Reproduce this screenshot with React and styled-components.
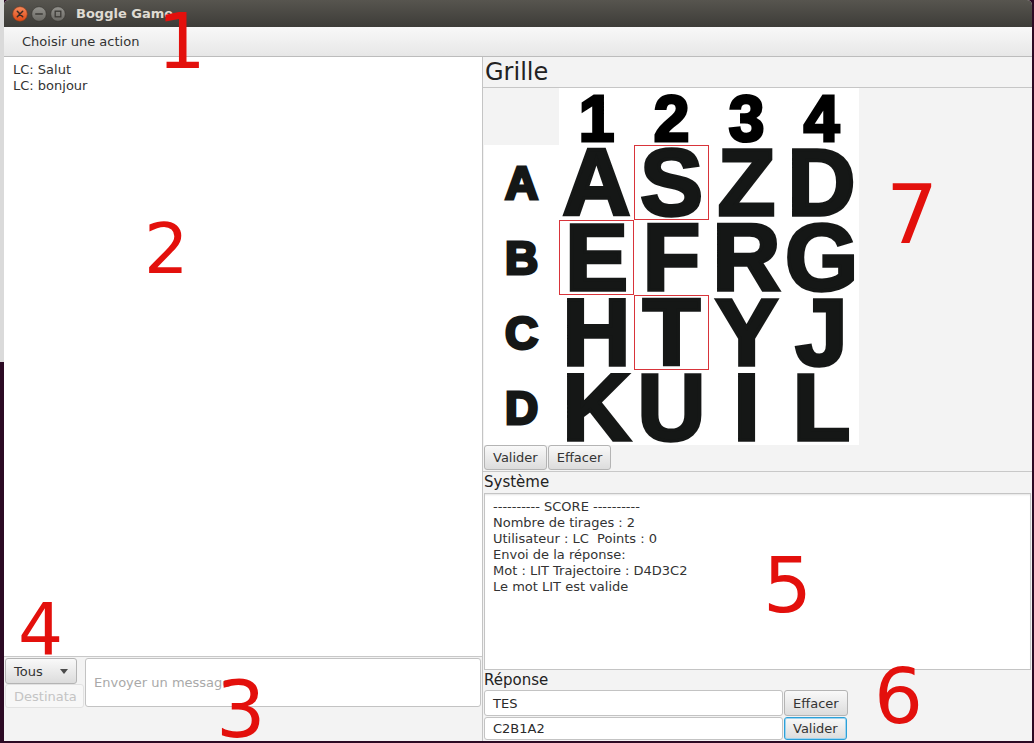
import React from 'react';
import styled, { createGlobalStyle } from 'styled-components';

const GlobalStyle = createGlobalStyle`
  html, body {
    margin: 0;
    padding: 0;
  }
  body {
    background: #2c0a24;
    font-family: "DejaVu Sans", "Liberation Sans", sans-serif;
    overflow: hidden;
  }
  * {
    box-sizing: border-box;
  }
`;

const GRID = [
  ['A', 'S', 'Z', 'D'],
  ['E', 'F', 'R', 'G'],
  ['H', 'T', 'Y', 'J'],
  ['K', 'U', 'I', 'L'],
];
const ROWS = ['A', 'B', 'C', 'D'];
const PATH = ['0-1', '1-0', '2-1'];

const SYSTEM_LINES = [
  '---------- SCORE ----------',
  'Nombre de tirages : 2',
  'Utilisateur : LC  Points : 0',
  'Envoi de la réponse:',
  'Mot : LIT Trajectoire : D4D3C2',
  'Le mot LIT est valide',
];

// annotations rouges posées sur la capture
const MARKS = [
  { n: '1', size: 77, top: 3, left: 157 },
  { n: '2', size: 70, top: 214, left: 144 },
  { n: '3', size: 78, top: 671, left: 216 },
  { n: '4', size: 71, top: 594, left: 18 },
  { n: '5', size: 77, top: 547, left: 763 },
  { n: '6', size: 77, top: 658, left: 874 },
  { n: '7', size: 82, top: 174, left: 886 },
];

const CloseIcon = () => (
  <svg width="16" height="16" viewBox="0 0 16 16">
    <defs>
      <linearGradient id="cl" x1="0" y1="0" x2="0" y2="1">
        <stop offset="0" stopColor="#f58a5c" />
        <stop offset="1" stopColor="#dd4814" />
      </linearGradient>
    </defs>
    <circle cx="8" cy="8" r="7.3" fill="url(#cl)" stroke="#8f3a1a" strokeWidth="0.6" />
    <path d="M5.3 5.3 L10.7 10.7 M10.7 5.3 L5.3 10.7" stroke="#3a2a24" strokeWidth="1.5" strokeLinecap="round" />
  </svg>
);

const MinIcon = () => (
  <svg width="16" height="16" viewBox="0 0 16 16">
    <defs>
      <linearGradient id="mn" x1="0" y1="0" x2="0" y2="1">
        <stop offset="0" stopColor="#94938e" />
        <stop offset="1" stopColor="#6a6964" />
      </linearGradient>
    </defs>
    <circle cx="8" cy="8" r="7.3" fill="url(#mn)" stroke="#35342f" strokeWidth="0.6" />
    <path d="M4.8 8 L11.2 8" stroke="#3c3b37" strokeWidth="1.6" strokeLinecap="round" />
  </svg>
);

const MaxIcon = () => (
  <svg width="16" height="16" viewBox="0 0 16 16">
    <defs>
      <linearGradient id="mx" x1="0" y1="0" x2="0" y2="1">
        <stop offset="0" stopColor="#94938e" />
        <stop offset="1" stopColor="#6a6964" />
      </linearGradient>
    </defs>
    <circle cx="8" cy="8" r="7.3" fill="url(#mx)" stroke="#35342f" strokeWidth="0.6" />
    <rect x="5.2" y="5.2" width="5.6" height="5.6" fill="none" stroke="#3c3b37" strokeWidth="1.3" />
  </svg>
);

const App = () => {
  return (
    <Desktop>
      <GlobalStyle />
      <Window>
        <TitleBar>
          <WindowButtons>
            <CloseIcon />
            <MinIcon />
            <MaxIcon />
          </WindowButtons>
          <Title>Boggle Game</Title>
        </TitleBar>

        <MenuBar>
          <MenuItem>Choisir une action</MenuItem>
        </MenuBar>

        <Body>
          <LeftPane>
            <ChatList>
              <ChatLine>LC: Salut</ChatLine>
              <ChatLine>LC: bonjour</ChatLine>
            </ChatList>
            <Compose>
              <RecipientColumn>
                <Combo>
                  <span>Tous</span>
                  <Arrow />
                </Combo>
                <DisabledField>Destinata</DisabledField>
              </RecipientColumn>
              <MessageField>Envoyer un message</MessageField>
            </Compose>
          </LeftPane>

          <RightPane>
            <GridTitle>Grille</GridTitle>
            <Board>
              <Corner />
              {[1, 2, 3, 4].map((c) => (
                <ColHead key={c}>{c}</ColHead>
              ))}
              {GRID.map((row, r) => (
                <React.Fragment key={r}>
                  <RowHead>{ROWS[r]}</RowHead>
                  {row.map((letter, c) => (
                    <Cell key={c} picked={PATH.includes(`${r}-${c}`)}>
                      {letter}
                    </Cell>
                  ))}
                </React.Fragment>
              ))}
            </Board>
            <ButtonRow>
              <Button>Valider</Button>
              <Button>Effacer</Button>
            </ButtonRow>
            <SectionLabel height={21}>Système</SectionLabel>
            <SystemArea>
              {SYSTEM_LINES.map((line, i) => (
                <SystemLine key={i}>{line}</SystemLine>
              ))}
            </SystemArea>
            <SectionLabel height={20}>Réponse</SectionLabel>
            <AnswerRow height={27}>
              <AnswerField>TES</AnswerField>
              <Button>Effacer</Button>
            </AnswerRow>
            <AnswerRow height={24}>
              <AnswerField>C2B1A2</AnswerField>
              <Button focused>Valider</Button>
            </AnswerRow>
          </RightPane>
        </Body>
      </Window>

      {MARKS.map((m) => (
        <Mark key={m.n} size={m.size} style={{ top: m.top, left: m.left }}>
          {m.n}
        </Mark>
      ))}
    </Desktop>
  );
};

export default App;

const Desktop = styled.div`
  position: relative;
  width: 1034px;
  height: 743px;
  padding: 0 2px 2px 4px;
  display: flex;
  background: linear-gradient(to right, #dadada 0, #dadada 4px, transparent 4px),
    #2c0a24;
  background-size: 100% 362px, auto;
  background-repeat: no-repeat;
`;

const Window = styled.div`
  flex: 1;
  display: flex;
  flex-direction: column;
  background: #f3f3f3;
  border-radius: 5px 5px 0 0;
  overflow: hidden;
`;

const TitleBar = styled.div`
  height: 27px;
  flex: 0 0 27px;
  display: flex;
  align-items: center;
  padding-left: 8px;
  background: linear-gradient(to bottom, #57554f, #3d3c38);
`;

const WindowButtons = styled.div`
  display: flex;
  gap: 3px;
  margin-right: 10px;
`;

const Title = styled.div`
  font-size: 13px;
  font-weight: bold;
  color: #dfdbd2;
`;

const MenuBar = styled.div`
  height: 30px;
  flex: 0 0 30px;
  display: flex;
  align-items: center;
  padding-left: 18px;
  background: linear-gradient(to bottom, #f8f8f8, #e7e7e7);
  border-bottom: 1px solid #bcbcbc;
`;

const MenuItem = styled.div`
  font-size: 13px;
  color: #333;
`;

const Body = styled.div`
  flex: 1;
  display: flex;
  min-height: 0;
`;

const LeftPane = styled.div`
  width: 479px;
  flex: 0 0 479px;
  display: flex;
  flex-direction: column;
  border-right: 1px solid #c4c4c4;
`;

const ChatList = styled.div`
  height: 600px;
  flex: 0 0 600px;
  background: #fff;
  border-bottom: 1px solid #c8c8c8;
  padding: 5px 9px;
`;

const ChatLine = styled.div`
  font-size: 13px;
  line-height: 16px;
  color: #333;
`;

const Compose = styled.div`
  display: flex;
  gap: 1px;
  padding: 1px 1px 0 1px;
`;

const RecipientColumn = styled.div`
  width: 79px;
  display: flex;
  flex-direction: column;
`;

const Combo = styled.div`
  width: 72px;
  height: 26px;
  display: flex;
  align-items: center;
  justify-content: space-between;
  padding: 0 8px 0 8px;
  font-size: 13px;
  color: #333;
  border: 1px solid #b4b4b4;
  border-radius: 3px;
  background: linear-gradient(to bottom, #f9f9f9, #dcdcdc);
`;

const Arrow = styled.span`
  width: 0;
  height: 0;
  border-left: 4.5px solid transparent;
  border-right: 4.5px solid transparent;
  border-top: 5px solid #4b4b4b;
`;

const DisabledField = styled.div`
  height: 24px;
  display: flex;
  align-items: center;
  padding-left: 8px;
  font-size: 13px;
  color: #c4c4c4;
  background: #f7f7f7;
  border: 1px solid #e2e2e2;
  border-radius: 3px;
  white-space: nowrap;
`;

const MessageField = styled.div`
  flex: 1;
  height: 49px;
  display: flex;
  align-items: center;
  padding-left: 8px;
  font-size: 13px;
  color: #a9a9a9;
  background: #fff;
  border: 1px solid #c3c3c3;
  border-radius: 3px;
`;

const RightPane = styled.div`
  flex: 1;
  display: flex;
  flex-direction: column;
  min-width: 0;
`;

const GridTitle = styled.div`
  height: 31px;
  flex: 0 0 31px;
  padding-left: 2px;
  font-size: 24px;
  line-height: 30px;
  color: #222;
  border-bottom: 1px solid #c6c6c6;
`;

const Board = styled.div`
  display: grid;
  grid-template-columns: repeat(5, 75px);
  grid-template-rows: 57px repeat(4, 75px);
  width: 375px;
  margin-left: 1px;
  background: #fff;
  font-family: "Liberation Sans", Arial, sans-serif;
  font-weight: bold;
  color: #151716;
`;

const Corner = styled.div`
  background: #f3f3f3;
`;

const ColHead = styled.div`
  text-align: center;
  font-size: 64px;
  line-height: 63px;
  color: #000;
  -webkit-text-stroke: 3px #000;
`;

const RowHead = styled.div`
  display: flex;
  align-items: center;
  justify-content: center;
  font-size: 46px;
  -webkit-text-stroke: 3px #151716;
`;

const Cell = styled.div`
  text-align: center;
  font-size: 94px;
  line-height: 76px;
  -webkit-text-stroke: 3.5px #151716;
  box-shadow: ${(props) => (props.picked ? 'inset 0 0 0 1px #d8343a' : 'none')};
`;

const ButtonRow = styled.div`
  height: 27px;
  flex: 0 0 27px;
  display: flex;
  gap: 1px;
  padding: 0 1px 1px 1px;
  border-bottom: 1px solid #c8c8c8;
`;

const Button = styled.button`
  height: 100%;
  padding: 0 8px;
  font-family: "DejaVu Sans", sans-serif;
  font-size: 13px;
  color: #333;
  border: 1px solid ${(props) => (props.focused ? '#2ba0d8' : '#b4b4b4')};
  border-radius: 3px;
  background: linear-gradient(to bottom, #f9f9f9, #dcdcdc);
  box-shadow: ${(props) => (props.focused ? 'inset 0 0 0 1px #9fd3ee' : 'none')};
`;

const SectionLabel = styled.div`
  height: ${(props) => props.height}px;
  flex: 0 0 ${(props) => props.height}px;
  padding-left: 1px;
  font-size: 15px;
  line-height: ${(props) => props.height}px;
  color: #222;
`;

const SystemArea = styled.div`
  height: 177px;
  flex: 0 0 177px;
  margin: 0 1px;
  padding: 5px 8px;
  background: #fff;
  border: 1px solid #c4c4c4;
  box-shadow: inset 0 2px 2px -1px #e4e4e4;
`;

const SystemLine = styled.div`
  font-size: 13px;
  line-height: 16px;
  color: #333;
  white-space: pre;
`;

const AnswerRow = styled.div`
  height: ${(props) => props.height}px;
  flex: 0 0 ${(props) => props.height}px;
  display: flex;
  gap: 1px;
  padding: 0 1px 1px 1px;
`;

const AnswerField = styled.div`
  width: 299px;
  height: 100%;
  display: flex;
  align-items: center;
  padding-left: 8px;
  font-size: 13px;
  color: #2a2a2a;
  background: #fff;
  border: 1px solid #c3c3c3;
  border-radius: 3px;
`;

const Mark = styled.div`
  position: absolute;
  font-family: "DejaVu Sans", sans-serif;
  font-size: ${(props) => props.size}px;
  line-height: 1;
  color: #e3100c;
  pointer-events: none;
`;
